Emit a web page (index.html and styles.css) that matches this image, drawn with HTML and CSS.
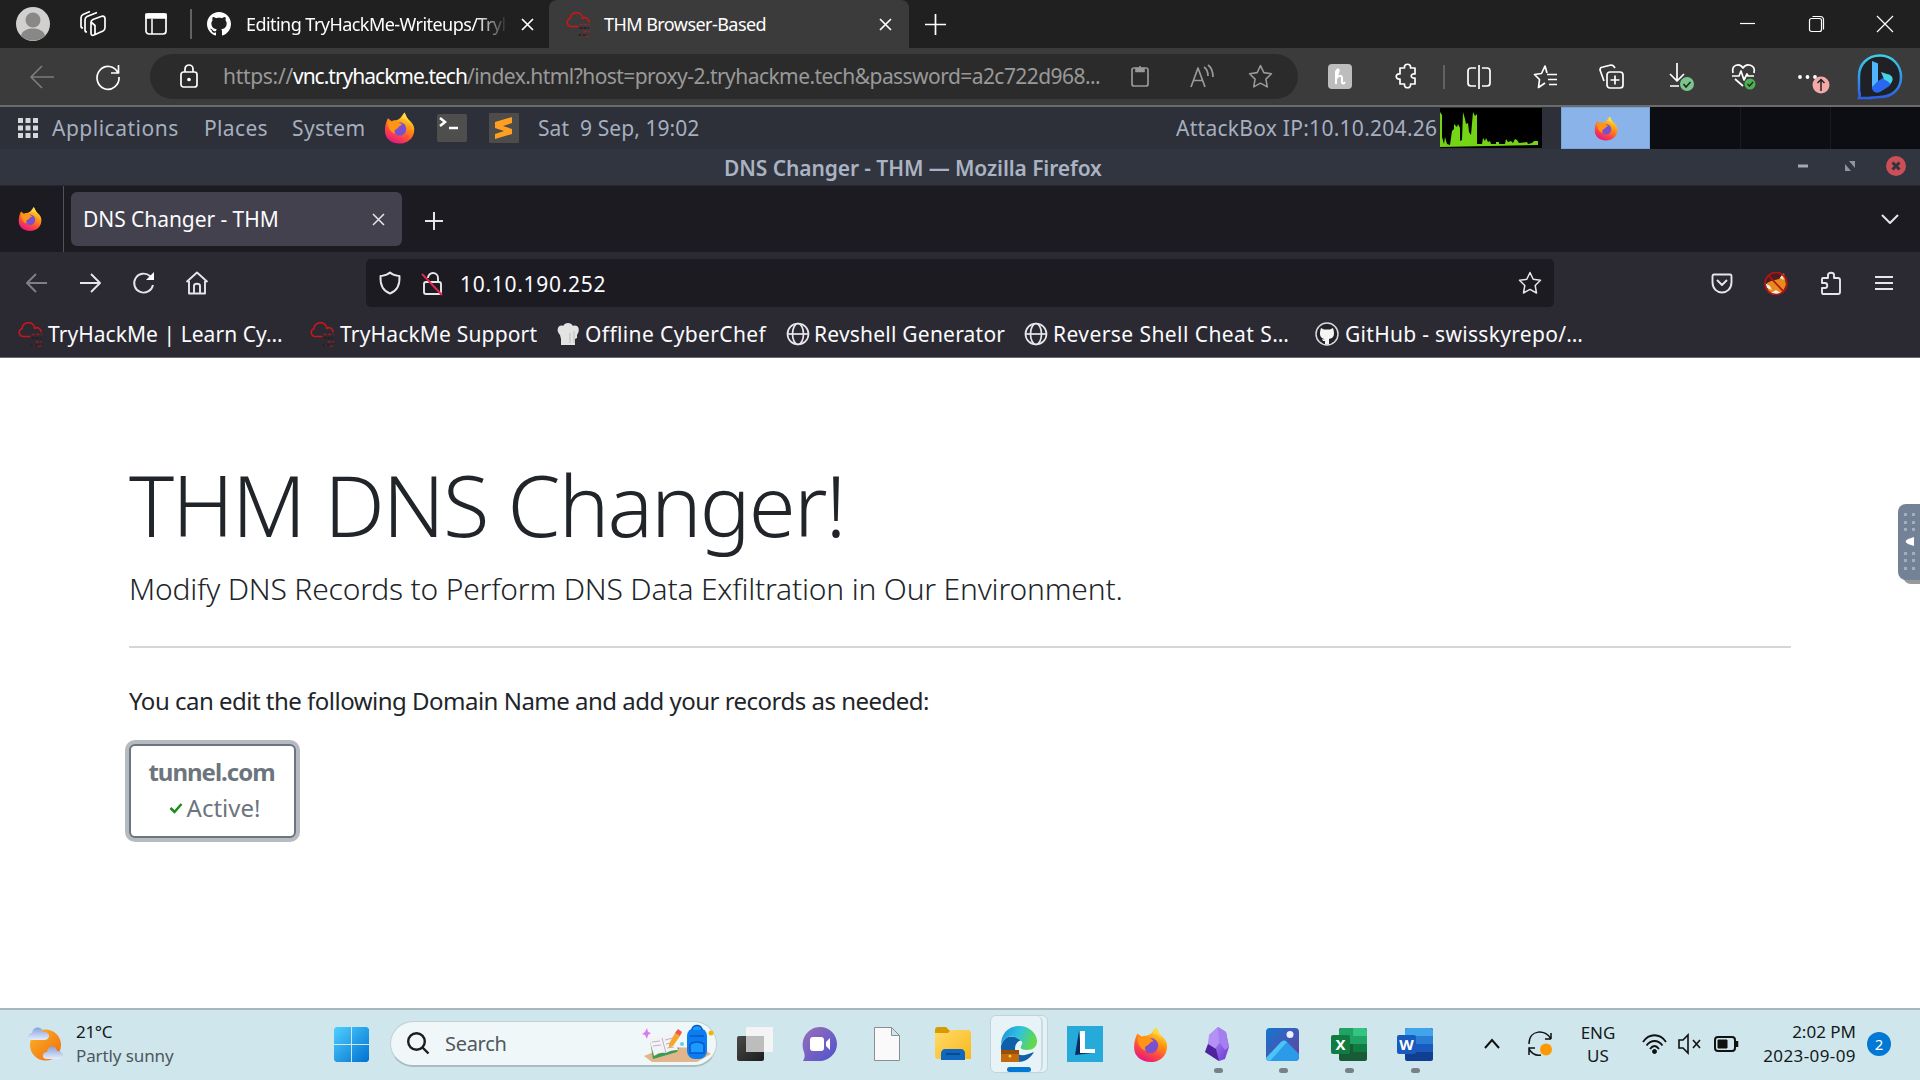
FILE: index.html
```html
<!DOCTYPE html>
<html lang="en">
<head>
<meta charset="utf-8">
<title>THM Browser-Based</title>
<link rel="stylesheet" href="styles.css">
</head>
<body>
<svg class="defs" width="0" height="0">
  <defs>
    <linearGradient id="gFox" x1=".8" y1="0" x2=".3" y2="1"><stop offset="0" stop-color="#fff44f"/><stop offset=".4" stop-color="#ff980e"/><stop offset=".7" stop-color="#ff4a3d"/><stop offset="1" stop-color="#e31587"/></linearGradient>
    <linearGradient id="gBing" x1="0" y1="0" x2="0" y2="1"><stop offset="0" stop-color="#3bd0e8"/><stop offset="1" stop-color="#2a5fe8"/></linearGradient>
    <linearGradient id="gWin" x1="0" y1="0" x2="1" y2="1"><stop offset="0" stop-color="#4fd0ff"/><stop offset="1" stop-color="#0070d0"/></linearGradient>
    <linearGradient id="gSun" x1="0" y1="0" x2="1" y2="1"><stop offset="0" stop-color="#f9b52a"/><stop offset="1" stop-color="#f26a0c"/></linearGradient>
    <linearGradient id="gCloud" x1="0" y1="0" x2="0" y2="1"><stop offset="0" stop-color="#86a4dc"/><stop offset="1" stop-color="#e6ecfb"/></linearGradient>
    <linearGradient id="gChat" x1="0" y1="0" x2="1" y2="1"><stop offset="0" stop-color="#9a6fb8"/><stop offset="1" stop-color="#4f52cf"/></linearGradient>
    <linearGradient id="gFolder" x1="0" y1="0" x2="1" y2="1"><stop offset="0" stop-color="#ffdc6a"/><stop offset="1" stop-color="#f9b61a"/></linearGradient>
    <linearGradient id="gEdge" x1="0" y1="0" x2="1" y2=".3"><stop offset="0" stop-color="#1b8fdc"/><stop offset=".55" stop-color="#2fc3dd"/><stop offset="1" stop-color="#62d84e"/></linearGradient>
    <linearGradient id="gPhoto" x1="0" y1="0" x2="1" y2="1"><stop offset="0" stop-color="#1377d0"/><stop offset="1" stop-color="#6a3f9c"/></linearGradient>
    <linearGradient id="gObs" x1="0" y1="0" x2="1" y2="1"><stop offset="0" stop-color="#c9a8ff"/><stop offset="1" stop-color="#6a35d0"/></linearGradient>
    <linearGradient id="gDark" x1="0" y1="0" x2="1" y2="1"><stop offset="0" stop-color="#4a4a48"/><stop offset="1" stop-color="#1d1d1d"/></linearGradient>
    <symbol id="firefox" viewBox="0 0 32 32">
      <path fill="url(#gFox)" d="M4 6l4 3c1-1 3-1 4-1 3-1 5-2 6-4l3-4c2 2 2 5 4 7 5 4 7 8 6 13-1 7-7 12-15 12S1 27 1 19c0-5 1-9 3-13z"/>
      <circle cx="16" cy="17" r="7" fill="#7a4fd0"/>
      <path fill="#ff9417" d="M4 9c3 1 5 1 7 0 3 0 5 1 8 4-3 0-4 3-6 4-2 1-3 2-1 5-5-1-8-6-8-13z"/>
      <path fill="#ffd93c" d="M21 0c1 4 4 6 5 10-2-3-5-4-8-4 1-2 3-3 3-6z"/>
    </symbol>
    <symbol id="thm" viewBox="0 0 24 24">
      <path fill="none" stroke="currentColor" stroke-width="1.500" d="M12 14H5a4 4 0 0 1-1-7.800 6 5.500 0 0 1 12-.2 4 4 0 0 1 6 4"/>
      <path fill="none" stroke="currentColor" stroke-width="1.500" stroke-dasharray="3 1.500" opacity=".75" d="M13 12h10M17 19h6M14 22h2M19 23h3"/>
      <path fill="none" stroke="#222" stroke-width="1.500" stroke-dasharray="3 1" d="M13 15.500h9M12 22h9"/>
    </symbol>
    <symbol id="github" viewBox="0 0 16 16">
      <path d="M8 0C3.580 0 0 3.580 0 8c0 3.540 2.290 6.530 5.470 7.590.4.070.55-.17.55-.38 0-.19-.01-.82-.01-1.490-2.010.37-2.530-.49-2.690-.94-.09-.23-.48-.94-.82-1.130-.28-.15-.68-.52-.01-.53.63-.01 1.080.58 1.230.82.72 1.210 1.870.87 2.330.66.07-.52.28-.87.51-1.070-1.780-.2-3.640-.89-3.640-3.950 0-.87.31-1.590.82-2.150-.08-.2-.36-1.020.08-2.120 0 0 .67-.21 2.200.82.64-.18 1.320-.27 2-.27s1.360.09 2 .27c1.530-1.040 2.200-.82 2.200-.82.44 1.100.16 1.920.08 2.120.51.56.82 1.270.82 2.150 0 3.070-1.870 3.750-3.650 3.950.29.25.54.73.54 1.480 0 1.070-.01 1.930-.01 2.200 0 .21.15.46.55.38A8.010 8.010 0 0 0 16 8c0-4.420-3.580-8-8-8z"/>
    </symbol>
    <symbol id="globe" viewBox="0 0 24 24">
      <g fill="none" stroke="#e8e8ec" stroke-width="1.700"><circle cx="12" cy="12" r="10.500"/><ellipse cx="12" cy="12" rx="5.500" ry="10.500"/><path d="M1.500 12h21"/></g>
    </symbol>
    <symbol id="star" viewBox="0 0 24 24">
      <path fill="none" stroke="currentColor" stroke-width="1.500" stroke-linejoin="round" d="M12 1.500l3.200 6.800 7.300 1-5.300 5.200 1.300 7.500-6.500-3.600L5.500 22l1.300-7.500L1.500 9.300l7.300-1z"/>
    </symbol>
  </defs>
</svg>

<header class="tabstrip">
  <svg width="34" height="34"><circle cx="17" cy="17" r="17" fill="#d2d0ce"/><circle cx="17" cy="13" r="7.500" fill="#8a8886"/><path d="M5 29c1-10 23-10 24 0-6 6-18 6-24 0z" fill="#8a8886"/></svg>
  <svg class="line" width="26" height="26"><path d="M11 11c0-1 1-2 2-2.500l8-3c2-1 4 0 4 2v9c0 2-1 3-2 3.500l-9 4c-2 1-3 0-3-2zM11 11l4 3.500v9M7 21c-1 0-2-1-2-2V9c0-2 1-3 2-3.500L17 1.500M3 17c-1 0-2-1-2-2V7c0-2 1-3 2-3.500L10 .5"/></svg>
  <svg class="line" width="22" height="22"><rect x="1" y="1" width="20" height="20" rx="3"/><path d="M1 3.500h20M7 6v15" stroke-width="1.500"/><rect x="1" y="1" width="20" height="4" fill="#fff"/></svg>
  <i class="divider"></i>
  <svg width="24" height="24" fill="#fff"><use href="#github"/></svg>
  <span class="tab-title faded">Editing TryHackMe-Writeups/Tryl</span>
  <svg class="line" width="13" height="13"><path d="M1 1l11 11M12 1L1 12"/></svg>
  <div class="tab-active">
    <svg class="thm" width="25" height="25"><use href="#thm"/></svg>
    <span class="tab-title">THM Browser-Based</span>
    <svg class="line" width="13" height="13"><path d="M1 1l11 11M12 1L1 12"/></svg>
  </div>
  <svg class="line" width="21" height="21"><path d="M10.500 0v21M0 10.500h21"/></svg>
  <svg class="line thin" width="16" height="16"><path d="M0 7.500h15"/></svg>
  <svg class="line thin" width="16" height="16"><rect x=".5" y="2.500" width="12" height="13" rx="2"/><path d="M3.500.5h8a3 3 0 0 1 3 3v10"/></svg>
  <svg class="line thin" width="16" height="16"><path d="M0 0l16 16M16 0L0 16"/></svg>
</header>

<div class="edgebar">
  <svg class="line dim" width="24" height="24"><path d="M24 12H1M12 1L1 12l11 11"/></svg>
  <svg class="line" width="25" height="25"><path d="M22 9A11 11.500 0 1 0 23 13M22.500 1v8H15"/></svg>
  <div class="omnibox">
    <svg class="line" width="18" height="24"><rect x="1" y="8" width="16" height="15" rx="2.500"/><path d="M5 8V5a4 4 0 0 1 8 0v3"/><circle cx="9" cy="15.500" r="1" fill="#fff"/></svg>
    <span class="url"><span class="scheme">https://</span><span class="host">vnc.tryhackme.tech</span><span class="path">/index.html?host=proxy-2.tryhackme.tech&amp;password=a2c722d968...</span></span>
    <svg class="line gray clip" width="18" height="22"><rect x="1" y="3" width="16" height="18" rx="2"/><path d="M5 3.500h8v3H5z" fill="#999"/><path d="M9 1v2"/></svg>
    <svg class="line gray read" width="24" height="24"><path d="M1 23L8 4l7 19M3.500 16.500h9M14 3c3 2 4 5 4 9M18 1c4 3 5 7 5 12"/></svg>
    <svg class="gray" width="25" height="25"><use href="#star"/></svg>
  </div>
  <svg width="24" height="25"><rect width="24" height="25" rx="4" fill="#bdbdbd"/><path d="M8 20V8c1-4 4-3 2 1l-2 6c2-4 6-4 6-1v4c0 2 2 2 3 0" fill="none" stroke="#fff" stroke-width="2"/></svg>
  <svg class="line" width="24" height="25"><path d="M5 4h4.500c-1-5 7-5 6 0H20v6c-5-1-5 5 0 4v6h-4.500c1 5-7 5-6 0H5v-5c-5 1-5-6 0-5z"/></svg>
  <i class="divider"></i>
  <svg class="line" width="24" height="24"><path d="M9 3H4a3 3 0 0 0-3 3v12a3 3 0 0 0 3 3h5M15 3h5a3 3 0 0 1 3 3v12a3 3 0 0 1-3 3h-5M12 0v24"/></svg>
  <svg class="line" width="25" height="24"><path d="M14 8l-2-7-3.500 7.500-7 1 5 5-1 8L12 18M14 9.500h10M15 14.500h9M16 19.500h8"/></svg>
  <svg class="line" width="25" height="25"><path d="M5 17L1 6c0-2 1-3 3-3l8-2c2 0 3 1 4 3"/><rect x="8" y="8" width="16" height="16" rx="3"/><path d="M16 11.500v9M11.500 16h9"/></svg>
  <svg width="30" height="30"><path class="line" d="M8 1v18M1 12l7 7 7-7M1 24h9"/><circle cx="18" cy="22" r="7" fill="#7cc68d"/><path d="M14.500 22l2.500 3 4.500-5" stroke="#222" fill="none" stroke-width="1.500"/></svg>
  <svg width="26" height="26"><path class="line" d="M2 9C0 0 9-1 12 4c3-5 13-4 11 5M1 12h7l2-5 3 9 3-6 1 2h6M4 15l8 7"/><circle cx="19" cy="20" r="5.500" fill="#4caf50"/><path d="M16.500 20l2 2 3.500-4" stroke="#222" fill="none" stroke-width="1.300"/></svg>
  <svg width="32" height="32"><g fill="#fff"><circle cx="2" cy="16" r="1.900"/><circle cx="9.500" cy="16" r="1.900"/><circle cx="17" cy="16" r="1.900"/></g><circle cx="23" cy="24" r="8.500" fill="#f4a9a8"/><path d="M23 30V19M19.500 22l3.500-3.500 3.500 3.500" stroke="#222" fill="none" stroke-width="1.500"/></svg>
  <svg width="45" height="46"><path d="M2 44c1-2 1-4 0-7V22C2 10 11 1.500 23 1.500S44 11 44 23 35 43 23 43c-4 0-8 1-12 1z" fill="#202027" stroke="url(#gBing)" stroke-width="2.500"/><path d="M15 7l6 2.500V28l-6 7z" fill="#4fb5ff"/><path d="M15 33l6-6 11-7c4 5 3 11-1 13l-8 5c-5 2-8-1-8-5z" fill="#2867ee"/><path d="M24 18l9 3c4 2 3 7 0 9-1-3-6-4-6-5z" fill="#44d5e0"/></svg>
</div>

<div class="panel">
  <svg width="20" height="20" fill="#d5d8de"><path d="M0 0h5v5H0zM7.500 0h5v5h-5zM15 0h5v5h-5zM0 7.500h5v5H0zM7.500 7.500h5v5h-5zM15 7.500h5v5h-5zM0 15h5v5H0zM7.500 15h5v5h-5zM15 15h5v5h-5z"/></svg>
  <span class="menu">Applications</span><span class="wide">Places</span><span class="wide">System</span>
  <svg width="31" height="32"><use href="#firefox"/></svg>
  <svg width="30" height="28"><rect width="30" height="28" rx="2" fill="#4e4e4d"/><path d="M3 4l5 4-5 4M12 14h9" fill="none" stroke="#fff" stroke-width="2.500"/></svg>
  <svg width="30" height="30"><rect width="30" height="30" rx="1" fill="#4e4c4a"/><path d="M6 9l17-5v6l-9 3 9 3v5L6 26v-5l9-3-9-3z" fill="#ff9f22"/></svg>
  <span class="clock">Sat&nbsp; 9 Sep, 19:02</span>
  <span class="ip">AttackBox IP:10.10.204.26</span>
  <svg width="102" height="40"><path d="M0 0h102v40H0z"/><path fill="#74d516" d="M0 39V4l2 3v22l2 7 1-7 2 7 3 1 2-14 2-2v-5l3 3 1-3 2 4v13l2-1 1-28 2 7 1 5 2-1 1 9 2 3 2-23 2 4 2-2v30h5l1-6 2 3 1-3 2 4 2-1 1 3h5v-2h3v2h6l1-5 2 3 3-1 2 2 2-4 2 1 2 3 8-1 1 2 4-1 2-2h4v4z"/></svg>
  <div class="workspace"><svg width="24" height="25"><use href="#firefox"/></svg></div>
  <div class="workspaces"><i></i><i></i><i></i></div>
</div>

<div class="titlebar">
  <span>DNS Changer - THM — Mozilla Firefox</span>
  <svg width="10" height="4"><path d="M0 2h10" stroke="#a3a9b5" stroke-width="3"/></svg>
  <svg width="10" height="10" fill="#8d94a2"><path d="M4 0h6v7zM0 3l6 7H0z"/></svg>
  <svg width="20" height="20"><circle cx="10" cy="10" r="10" fill="#cc4f58"/><path d="M6.500 6.500l7 7M13.500 6.500l-7 7" stroke="#2f343f" stroke-width="3"/></svg>
</div>

<div class="fftabs">
  <div class="ffhome"><svg width="24" height="24"><use href="#firefox"/></svg></div>
  <div class="fftab"><span>DNS Changer - THM</span><svg class="ffline" width="13" height="13"><path d="M1 1l11 11M12 1L1 12" stroke-width="1.500"/></svg></div>
  <svg class="ffline" width="18" height="18"><path d="M9 0v18M0 9h18" stroke-width="2"/></svg>
  <svg class="ffline" width="18" height="11"><path d="M1 1l8 8 8-8" stroke-width="2"/></svg>
</div>

<div class="ffbar">
  <svg class="ffline off" width="22" height="20"><path d="M21 10H1M10 1l-9 9 9 9"/></svg>
  <svg class="ffline" width="22" height="20"><path d="M0 10h20M11 1l9 9-9 9"/></svg>
  <svg class="ffline" width="22" height="24"><path d="M20 14a9.500 9.500 0 1 1-3-9l2 2"/><path d="M21 1v8h-8z" fill="#fbfbfe" stroke="none"/></svg>
  <svg class="ffline" width="24" height="24"><path d="M.5 11L11 1.500 21.500 11M3 10v12.500h16V10M8 22v-7c0-3 6-3 6 0v7"/></svg>
  <div class="ffurl">
    <svg class="ffline" width="22" height="24"><path d="M11 1.500c3 3 6 3 9.500 3.500C21 14 18 20 11 22.500 4 20 1 14 1.500 5 5 4.500 8 4.500 11 1.500z"/></svg>
    <svg class="ffline" width="22" height="25"><rect x="2" y="11" width="17" height="12" rx="2"/><path d="M6 7a5 5 0 0 1 10 0v4"/><path d="M0 3l20 21" stroke="#e22850"/></svg>
    <span>10.10.190.252</span>
    <svg class="ffstar" width="24" height="24"><use href="#star"/></svg>
  </div>
  <svg class="ffline" width="22" height="21"><path d="M3 1.500h16c1 0 1.500 1 1.500 2V9c0 14-19 14-19 0V3.500c0-1 .5-2 1.500-2zM6 7l5 5 5-5"/></svg>
  <svg width="24" height="25"><circle cx="12" cy="12.500" r="10.500" fill="#4a1d20"/><path d="M3 12l4-2 8-2 5-6 2 12-4 8-9 2-5-3z" fill="#e88b1a"/><path d="M1 12l5 3 2 4-5-2zM18 4l2 5-4-2zM7 22l5-3 5 3-5 2z" fill="#eee"/><circle cx="12" cy="12.500" r="11" fill="none" stroke="#b51416" stroke-width="1.600"/><path d="M4 4l16 17" stroke="#b51416" stroke-width="1.800"/></svg>
  <svg class="ffline" width="22" height="25"><path d="M3 7h5V4c0-3 6-3 6 0v3h4c1 0 2 1 2 2v12c0 1-1 2-2 2H3c-1 0-1-1-1-2v-4h3c3 0 3-5 0-5H2V8c0-1 0-1 1-1z"/></svg>
  <svg class="ffline" width="18" height="16"><path d="M0 2h18M0 8h18M0 14h18"/></svg>
</div>

<nav class="bookmarks">
  <svg class="thm" width="25" height="25"><use href="#thm"/></svg><span class="b1">TryHackMe | Learn Cy…</span>
  <svg class="thm" width="25" height="25"><use href="#thm"/></svg><span class="b2">TryHackMe Support</span>
  <svg width="22" height="22"><path d="M3 12C-2 7 2 1 6 3c2-4 8-4 10 0 5-2 8 4 4 9v3l-2 1v6H4v-6z" fill="#e3e3e3"/><path d="M13 10v10M17 8v12" stroke="#bbb"/></svg><span class="b3">Offline CyberChef</span>
  <svg width="24" height="24"><use href="#globe"/></svg><span class="b4">Revshell Generator</span>
  <svg width="24" height="24"><use href="#globe"/></svg><span class="b5">Reverse Shell Cheat S…</span>
  <svg width="24" height="24"><circle cx="12" cy="12" r="11" fill="#222229" stroke="#d8d8dc" stroke-width="1.500"/><path d="M6 6l3 1.500h6L18 6c1 3 2 8-1 10l-3 1v5.500h-4V19H8l-1-2 3 .5-3-1.500C4 14 5 9 6 6z" fill="#f4f4f4"/></svg><span class="b6">GitHub - swisskyrepo/…</span>
</nav>

<main class="page">
  <h1>THM DNS Changer!</h1>
  <p class="lead">Modify DNS Records to Perform DNS Data Exfiltration in Our Environment.</p>
  <hr>
  <p class="note">You can edit the following Domain Name and add your records as needed:</p>
  <button class="domain"><b>tunnel.com</b><span class="status"><svg width="14" height="12"><path d="M1.500 6l4 4 7-8" fill="none" stroke="#198c19" stroke-width="2.500"/></svg>Active!</span></button>
  <div class="handle"><svg width="22" height="76"><g fill="#a3afbf"><path d="M6 9h3v3H6zM14 9h3v3h-3zM6 17h3v3H6zM14 17h3v3h-3zM6 24h3v3H6zM14 24h3v3h-3zM6 48h3v3H6zM14 48h3v3h-3zM6 55h3v3H6zM14 55h3v3h-3zM6 63h3v3H6zM14 63h3v3h-3z"/></g><path d="M16 33v9l-6-2c-3-2-3-3 0-5z" fill="#fff"/></svg></div>
</main>

<footer class="taskbar">
  <svg width="36" height="34"><circle cx="17.500" cy="18" r="15.500" fill="url(#gSun)"/><path d="M4 13c-5 0-5-7 0-7 1-7 10-7 11-1 8-1 8 8 1 8z" fill="url(#gCloud)"/><path d="M19 32c-6 0-5-7 0-7 1-7 9-7 10-1 8 0 8 8 2 8z" fill="url(#gCloud)"/></svg>
  <div class="weather"><span>21°C</span><small>Partly sunny</small></div>
  <svg width="35" height="35" fill="url(#gWin)"><path d="M2 0h15v17H0V2zM18 0h15l2 2v15H18zM0 18h17v17H2l-2-2zM18 18h17v15l-2 2H18z"/></svg>
  <div class="search">
    <svg width="23" height="23" fill="none" stroke="#1c1c1c" stroke-width="2.400"><circle cx="9.500" cy="9.500" r="8.300"/><path d="M15.500 15.500l6 6"/></svg>
    <span>Search</span>
    <svg width="70" height="38"><path d="M2 31l22-9 36 1 9 6-14 8H10z" fill="#e2b68c"/><path d="M8 15l3 19 24-7 2-4z" fill="#3c9a52"/><path d="M7 13c6-3 9-2 13 0 3-3 8-4 12-4l4 16c-5 0-9 1-12 3-4-1-8 0-12 3z" fill="#f4f2f5"/><path d="M20 13l4 15M10 17l8-1M11 21l8-1M23 15l8-2M24 19l8-2M25 23l7-1" stroke="#b8b3c6"/><path d="M27 19l6-11 5 3-7 10-4 2z" fill="#f7a62b"/><path d="M33 8l3-4 4 3-2 4z" fill="#ef5548"/><path d="M5 3l1 4 3 1-3 2-1 4-2-4-3-1 3-2z" fill="#d879f5"/><rect x="45" y="3" width="20" height="31" rx="8" fill="#0c7df0"/><path d="M50 5c0-6 10-6 10 0M48 11h14M48 20c2-4 12-4 14 0v8H48z" fill="#1b9bff" stroke="#0858c8" stroke-width="1.500"/><circle cx="69" cy="8" r="2.500" fill="#f5b400"/><circle cx="40" cy="19" r="2" fill="#5ad0ea"/></svg>
  </div>
  <svg width="36" height="35"><rect y="9" width="27" height="25" rx="2" fill="url(#gDark)"/><rect x="9" width="27" height="25" rx="1" fill="#f4f4f4"/><path d="M9 9h18v16H9z" fill="#bdbdbd"/></svg>
  <svg width="36" height="36"><path d="M1 35c2-3 2-6 1-9C-3 12 7 1 18 1c9 0 17 7 17 17S26 35 18 35z" fill="url(#gChat)"/><rect x="8" y="11" width="14" height="14" rx="3" fill="#fff"/><path d="M24 16l4-4v12l-4-4z" fill="#fff"/></svg>
  <svg width="26" height="34"><path d="M.5.500h17l8 8v25H.5zM17.500.500v8h8" fill="#fafafa" stroke="#8a8f92"/></svg>
  <svg width="36" height="34"><path d="M0 3c0-2 1-3 3-3h8l4 4v6H0z" fill="#d99a00"/><path d="M0 6h13l3-3h18l2 2v27H2l-2-2z" fill="url(#gFolder)"/><path d="M6 33v-7c0-2 2-4 4-4h16c2 0 4 2 4 4v7z" fill="#0f68bd"/><path d="M11 27h14" stroke="#0a4a8c" stroke-width="2"/></svg>
  <div class="edge-stack"><div class="edge-tile"><svg width="36" height="36"><path d="M0 20c2-8 8-11 14-9l8 3c-5 0-8 4-8 9 1 7 8 8 19 3-4 7-10 10-16 10C6 35-1 29 0 20z" fill="#0f5fa9"/><path d="M0 19C0 7 8 0 18 0c11 0 18 8 18 15 0 6-4 9-10 9-5 0-7-1-6-4 3-4 0-6-3-7C10 7 3 12 0 19z" fill="url(#gEdge)"/><rect y="24" width="18" height="12" fill="#c26a10"/><path d="M0 24h18v4H0z" fill="#9a4e08"/><circle cx="9" cy="30" r="1.500" fill="#ffd23c"/></svg><i></i></div></div>
  <svg width="36" height="36"><path d="M0 0h36v36H0z" fill="#25aada"/><path d="M12 5L8 29l17-2-11-2z" fill="#0b2a5e"/><path d="M13 5h5v18h10v4H13z" fill="#fff"/></svg>
  <svg width="35" height="35"><use href="#firefox"/></svg>
  <div class="app"><svg width="26" height="34"><path d="M13 0L4 8 3 17l-3 8 14 9 6-2 4-12-3-15z" fill="url(#gObs)"/><path d="M13 0L4 8v10l6 4 5-7z" fill="#b391f5"/><path d="M3 17l8 5 3 12-14-9z" fill="#4f239e"/><path d="M13 0l8 5 3 15-4 3-6-8z" fill="#a57ff0"/></svg></div>
  <div class="app"><svg width="33" height="33"><rect width="33" height="33" rx="4" fill="url(#gPhoto)"/><path d="M0 30l15-16c2-2 4-2 6 0l12 12v3c0 2-2 4-4 4H4c-2 0-4-1-4-3z" fill="#2b9ae8"/><path d="M0 30l15-16c2-2 4-2 6 0L4 33c-2 0-4-1-4-3z" fill="#4cc4f5"/><circle cx="24" cy="6.500" r="3.500" fill="#f1ecfa"/></svg></div>
  <div class="app"><svg width="36" height="33"><rect x="8" width="28" height="33" rx="2" fill="#185c37"/><path d="M10 0h12v8H8V2zM8 8h14v8H8z" fill="#21a366"/><path d="M22 0h12l2 2v6H22z" fill="#33c481"/><path d="M22 8h14v8H22z" fill="#21a366"/><path d="M22 16h14v8H22z" fill="#107c41"/><rect y="7" width="19" height="19" rx="2" fill="#107c41"/><text x="9.500" y="22" text-anchor="middle">X</text></svg></div>
  <div class="app"><svg width="36" height="33"><rect x="8" width="28" height="33" rx="2" fill="#103f91"/><path d="M10 0h24l2 2v6H8V2z" fill="#41a5ee"/><path d="M8 8h28v8H8z" fill="#2b7cd3"/><path d="M8 16h28v8H8z" fill="#185abd"/><rect y="7" width="19" height="19" rx="2" fill="#185abd"/><text x="9.500" y="22" text-anchor="middle">W</text></svg></div>
  <svg class="tray" width="16" height="10"><path d="M1 9l7-8 7 8" stroke-width="2"/></svg>
  <svg class="tray" width="25" height="26"><path d="M1 13C1-2 18-2 23 8V2M23 8h-6M1 24v-7h6M1 18c3 5 7 7 12 6" stroke-width="1.500"/><circle cx="18" cy="18.500" r="6" fill="#ff9800" stroke="none"/></svg>
  <div class="lang"><span>ENG</span><span>US</span></div>
  <svg class="tray" width="25" height="20"><path d="M1 8C7-1 18-1 24 8M4.500 11.500c4.500-6 11.500-6 16 0M8 15c3-4 6-4 9 0" stroke-width="1.800"/><circle cx="12.500" cy="17.500" r="2" fill="#111"/></svg>
  <svg class="tray" width="25" height="20"><path d="M1 6h4l5-5v18l-5-5H1zM15 6l7 8M22 6l-7 8" stroke-width="1.600"/></svg>
  <svg class="tray" width="25" height="18"><rect x="1" y="2" width="20" height="14" rx="3" stroke-width="2"/><path d="M4 5h9v8H4z" fill="#111"/><path d="M23 6v6" stroke-width="2.500"/></svg>
  <div class="time"><span>2:02 PM</span><span class="date">2023-09-09</span></div>
  <div class="count">2</div>
</footer>
</body>
</html>
```
FILE: styles.css
```css
* { box-sizing: border-box; }
body {
  margin: 0;
  width: 1920px;
  height: 1080px;
  overflow: hidden;
  display: flex;
  flex-direction: column;
  background: #fff;
  font: 21px "Noto Sans", sans-serif;
  white-space: nowrap;
}
svg { display: block; overflow: visible; flex: none; }
.defs { position: absolute; }
.line { fill: none; stroke: #fff; stroke-width: 1.7; stroke-linejoin: round; }
.thin { stroke-width: 1.2; }
.dim { stroke: #7c7c7c; }
.line.gray { stroke: #999; }
.gray { color: #999; }
.thm { color: #c8161d; }
.divider { width: 2px; background: #626262; }

.tabstrip, .edgebar, .panel, .titlebar, .ffbar, .bookmarks, .taskbar { display: grid; align-items: center; flex: none; }

.tabstrip {
  height: 48px;
  padding-left: 16px;
  background: #202020;
  grid-template-columns: 64px 65px 45px 17px 39px 275px 28px 376px 815px 69px 68px 27px;
  color: #fff;
}
.tabstrip .divider { height: 30px; }
.tab-title { margin-top: -1px; font-size: 18px; letter-spacing: -.55px; }
.faded {
  width: 262px;
  overflow: hidden;
  -webkit-mask-image: linear-gradient(90deg, #000 88%, transparent);
  mask-image: linear-gradient(90deg, #000 88%, transparent);
}
.tab-active {
  width: 360px;
  height: 48px;
  padding: 0 17px;
  display: flex;
  align-items: center;
  gap: 13px;
  border-radius: 8px 8px 0 0;
  background: #3b3b3b;
}
.tab-active .line { margin-left: auto; }

.edgebar {
  height: 59px;
  background: #3b3b3b;
  padding-left: 30px;
  border-bottom: 2px solid #6b6b6b;
  grid-template-columns: 66px 54px 1178px 67px 48px 24px 66px 66px 70px 62px 67px 59px 45px;
}
.edgebar .divider { height: 24px; }
.omnibox {
  width: 1148px;
  height: 45px;
  padding: 0 25px 1px 30px;
  display: flex;
  align-items: center;
  border-radius: 23px;
  background: #2b2b2b;
  color: #999;
}
.url { flex: none; width: 908px; margin-left: 25px; }
.clip { margin-right: 41px; }
.read { margin-right: 34px; }
.scheme { letter-spacing: -.3px; }
.host { color: #fff; letter-spacing: -1px; }
.path { letter-spacing: -.56px; }

.panel {
  height: 42px;
  padding-left: 18px;
  background: #2d2f39;
  color: #a6afbf;
  grid-template-columns: 34px 152px 88px 92px 53px 52px 49px 638px 264px 121px 89px 270px;
}
.menu { letter-spacing: .5px; }
.wide { letter-spacing: .35px; }
.clock { letter-spacing: .06px; }
.ip { letter-spacing: .27px; }
.workspace {
  height: 42px;
  display: grid;
  place-items: center;
  background: #8ab4e9;
  border: 1px solid #78a4dc;
}
.workspaces { height: 42px; display: grid; grid-template-columns: repeat(3, 1fr); background: #0d0e13; }
.workspaces i + i { border-left: 1px solid #1a1b21; }

.titlebar {
  height: 37px;
  padding: 0 0 2px 724px;
  background: #30353f;
  border-bottom: 1px solid #25262e;
  color: #abb3c2;
  font-weight: 600;
  letter-spacing: 0;
  grid-template-columns: 1074px 47px 41px 20px;
}
.titlebar span { margin-top: 3px; letter-spacing: -.1px; }

.fftabs { height: 66px; display: flex; align-items: center; background: #1c1b22; flex: none; color: #fbfbfe; }
.ffhome { width: 64px; height: 66px; padding: 21px 0 0 18px; border-right: 1px solid #52525e; }
.fftab {
  width: 331px;
  height: 54px;
  margin: 0 23px 0 7px;
  padding: 0 17px 0 12px;
  display: flex;
  align-items: center;
  justify-content: space-between;
  border-radius: 6px;
  background: #42414d;
  letter-spacing: -.06px;
}
.fftabs > .ffline { margin-top: 4px; }
.fftabs > .ffline:last-child { margin: 0 21px 0 auto; }
.ffline { fill: none; stroke: #e6e6ea; stroke-width: 1.9; stroke-linejoin: round; }
.off { opacity: .45; }

.ffbar {
  height: 62px;
  padding-left: 26px;
  background: #2b2a33;
  grid-template-columns: 54px 53px 53px 180px 1345px 53px 56px 55px 18px;
}
.ffurl {
  width: 1188px;
  height: 48px;
  padding: 0 12px 0 13px;
  display: flex;
  align-items: center;
  border-radius: 5px;
  background: #1c1b22;
  color: #fbfbfe;
}
.ffurl span { margin: 1px 0 0 16px; letter-spacing: .7px; }
.ffurl .ffline + .ffline { margin-left: 21px; }
.ffstar { margin-left: auto; color: #e6e6ea; }

.bookmarks {
  height: 44px;
  padding: 0 0 3px 18px;
  background: #2b2a33;
  border-bottom: 1px solid #6a6a6e;
  color: #fbfbfe;
  grid-template-columns: 30px 262px 30px 217px 28px 201px 28px 210px 29px 262px 30px 240px;
}
.b1 { letter-spacing: .05px; }
.b2 { letter-spacing: .17px; }
.b3 { letter-spacing: .38px; }
.b4 { letter-spacing: .22px; }
.b5 { letter-spacing: .43px; }
.b6 { letter-spacing: .3px; }

.page { position: relative; flex: 1; padding: 94px 129px 0; color: #212529; }
h1 { margin: 0 0 10px; font-size: 85px; line-height: 105px; font-weight: 300; letter-spacing: -1.9px; }
.lead { margin: 0 0 35px; font-size: 30px; line-height: 44px; font-weight: 300; letter-spacing: -.18px; }
hr { margin: 0 0 36px; height: 2px; border: 0; background: #d5d6d7; }
.note { margin: 0 0 26px; font-size: 24px; line-height: 34px; letter-spacing: -.51px; }
.domain {
  width: 167px;
  height: 94px;
  margin-left: 0;
  padding: 8px 0 0;
  display: flex;
  flex-direction: column;
  align-items: center;
  border: 2px solid #6c757d;
  border-radius: 6px;
  box-shadow: 0 0 0 4px #b5bbc0;
  background: #fff;
  color: #6c757d;
  font: 24px/36px "Noto Sans", sans-serif;
}
.domain b { margin-left: -2px; letter-spacing: -1px; }
.status { display: flex; align-items: center; gap: 4px; margin-left: 4px; }
.handle {
  position: absolute;
  right: 0;
  top: 146px;
  width: 22px;
  height: 76px;
  border-radius: 8px 0 0 8px;
  background: #748297;
  box-shadow: 5px 4px 0 #999;
}

.taskbar {
  height: 72px;
  padding: 0 0 2px 28px;
  background: #cfe7ec;
  border-top: 2px solid #a7b8bc;
  grid-template-columns: 48px 258px 56px 347px 65px 72px 61px 55px 77px 66px 72px 61px 65px 66px 87px 44px 52px 62px 36px 36px 49px 104px 24px;
  color: #15191b;
  font-size: 17px;
}
.weather, .lang, .time { display: flex; flex-direction: column; line-height: 24px; }
.weather span { letter-spacing: -.3px; }
.weather small { font-size: 17px; letter-spacing: -.1px; color: #4d575b; }
.search {
  width: 327px;
  height: 46px;
  padding: 0 4px 0 16px;
  display: flex;
  align-items: center;
  border: 1px solid #bfd0d4;
  border-bottom: 2px solid #a9bcc1;
  border-radius: 23px;
  background: #f0f7f9;
  color: #50585b;
  font-size: 20px;
}
.search span { margin: 0 auto 0 15px; letter-spacing: -.3px; }
.edge-stack {
  width: 58px;
  height: 58px;
  border-radius: 6px;
  background: #e4f1f5;
  border: 1px solid #bfd5db;
}
.edge-tile {
  position: relative;
  width: 52px;
  height: 56px;
  padding: 10px 0 0 10px;
  border-radius: 6px;
  background: #e8f3f7;
  border-right: 2px solid #c8dce2;
}
.edge-tile i { position: absolute; left: 16px; bottom: 0; width: 24px; height: 5px; border-radius: 3px; background: #0078d4; }
.app { position: relative; width: max-content; }
.app::after {
  content: "";
  position: absolute;
  left: calc(50% - 4px);
  bottom: -12px;
  width: 9px;
  height: 5px;
  border-radius: 3px;
  background: #768286;
}
.app text { fill: #fff; font: 700 15px "Noto Sans", sans-serif; }
.tray { fill: none; stroke: #111; }
.lang { width: 36px; align-items: center; line-height: 23px; }
.time { width: 93px; align-items: flex-end; }
.date { letter-spacing: .4px; }
.count {
  width: 24px;
  height: 24px;
  border-radius: 50%;
  background: #0078d4;
  color: #fff;
  text-align: center;
  line-height: 24px;
  font-size: 15px;
}
```
